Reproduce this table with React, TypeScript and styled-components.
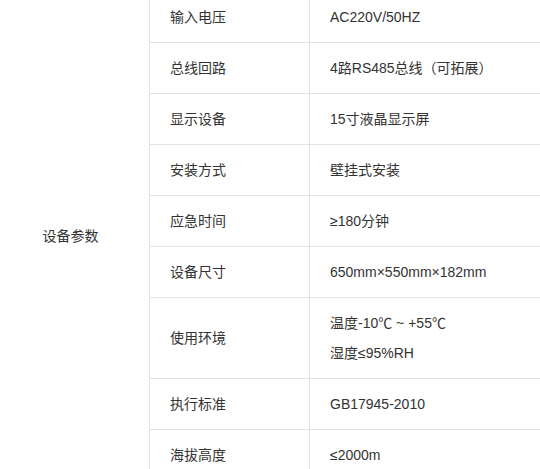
import styled, { createGlobalStyle } from "styled-components";

const GlobalStyle = createGlobalStyle`
  html, body {
    margin: 0;
    padding: 0;
    background: #fff;
    overflow: hidden;
  }
  body {
    font-family: "Liberation Sans", "Noto Sans CJK SC", sans-serif;
    font-size: 14px;
    color: #333;
  }
`;

type Row = { name: string; values: string[] };

const rows: Row[] = [
  { name: "输入电压", values: ["AC220V/50HZ"] },
  { name: "总线回路", values: ["4路RS485总线（可拓展）"] },
  { name: "显示设备", values: ["15寸液晶显示屏"] },
  { name: "安装方式", values: ["壁挂式安装"] },
  { name: "应急时间", values: ["≥180分钟"] },
  { name: "设备尺寸", values: ["650mm×550mm×182mm"] },
  { name: "使用环境", values: ["温度-10℃ ~ +55℃", "湿度≤95%RH"] },
  { name: "执行标准", values: ["GB17945-2010"] },
  { name: "海拔高度", values: ["≤2000m"] },
];

export default function App() {
  return (
    <>
      <GlobalStyle />
      <SpecTable>
        <tbody>
          {rows.map((row, i) => (
            <tr key={row.name}>
              {i === 0 && <GroupCell rowSpan={rows.length}>设备参数</GroupCell>}
              <NameCell>{row.name}</NameCell>
              <ValueCell>
                {row.values.map((v) => (
                  <Line key={v}>{v}</Line>
                ))}
              </ValueCell>
            </tr>
          ))}
        </tbody>
      </SpecTable>
    </>
  );
}

const SpecTable = styled.table`
  border-collapse: collapse;
  width: 560px;
  margin-top: -9px;
  table-layout: fixed;
`;

const Cell = styled.td`
  border: 1px solid #e3e3e3;
  padding: 10px 20px;
  line-height: 30px;
  vertical-align: middle;
  text-align: left;
`;

const GroupCell = styled(Cell)`
  width: 141px;
  padding: 0 8px 0 0;
  text-align: center;
  border-left: none;
`;

const NameCell = styled(Cell)`
  width: 119px;
`;

const ValueCell = styled(Cell)``;

const Line = styled.p`
  margin: 0;
`;
